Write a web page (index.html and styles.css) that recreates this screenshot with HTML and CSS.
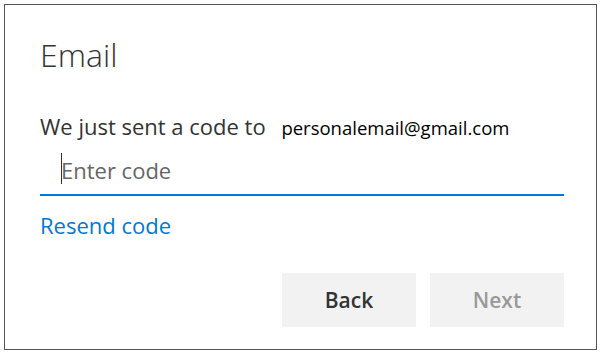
FILE: index.html
```html
<!DOCTYPE html>
<html lang="en">

<head>
    <meta charset="UTF-8">
    <meta name="viewport" content="width=device-width, initial-scale=1.0">
    <title>Email</title>
    <link rel="stylesheet" href="styles.css">
</head>

<body>
    <div class="card">
        <h1 class="title">Email</h1>
        <p class="intro">We just sent a code to <span class="address">personalemail@gmail.com</span></p>
        <div class="field">
            <span class="caret"></span>
            <input class="code-input" type="text" placeholder="Enter code">
        </div>
        <a class="resend" href="#">Resend code</a>
        <div class="actions">
            <button class="btn">Back</button>
            <button class="btn btn-disabled">Next</button>
        </div>
    </div>
</body>

</html>
```

FILE: styles.css
```css
body {
    margin: 0;
    font-family: "Open Sans", "Noto Sans", sans-serif;
    background: #fff;
}

.card {
    box-sizing: border-box;
    width: 593px;
    height: 346px;
    margin: 4px;
    border: 1px solid #555;
    padding: 30px 32px 0 35px;
    display: flex;
    flex-direction: column;
}

.title {
    margin: 0;
    font-size: 32px;
    font-weight: 300;
    line-height: 40px;
    color: #333;
}

.intro {
    margin: 36px 0 0;
    font-size: 22px;
    line-height: 30px;
    color: #333;
}

.address {
    margin-left: 10px;
    font-size: 18.5px;
    color: #000;
}

.field {
    position: relative;
    margin-top: 2px;
    border-bottom: 2px solid #0078d7;
}

.code-input {
    box-sizing: border-box;
    width: 100%;
    height: 49px;
    border: none;
    outline: none;
    padding: 0 0 0 21px;
    font-family: inherit;
    font-size: 22px;
    color: #333;
    background: transparent;
}

.code-input::placeholder {
    color: #666;
}

.caret {
    position: absolute;
    left: 21px;
    top: 8px;
    width: 1px;
    height: 31px;
    background: #333;
}

.resend {
    margin-top: 14px;
    align-self: flex-start;
    font-size: 22px;
    line-height: 30px;
    color: #0078d7;
    text-decoration: none;
}

.actions {
    margin-top: 33px;
    display: flex;
    justify-content: flex-end;
    gap: 14px;
}

.btn {
    width: 134px;
    height: 54px;
    border: none;
    background: #f2f2f2;
    font-family: inherit;
    font-size: 21px;
    font-weight: 600;
    color: #333;
}

.btn-disabled {
    color: #999;
}
```
